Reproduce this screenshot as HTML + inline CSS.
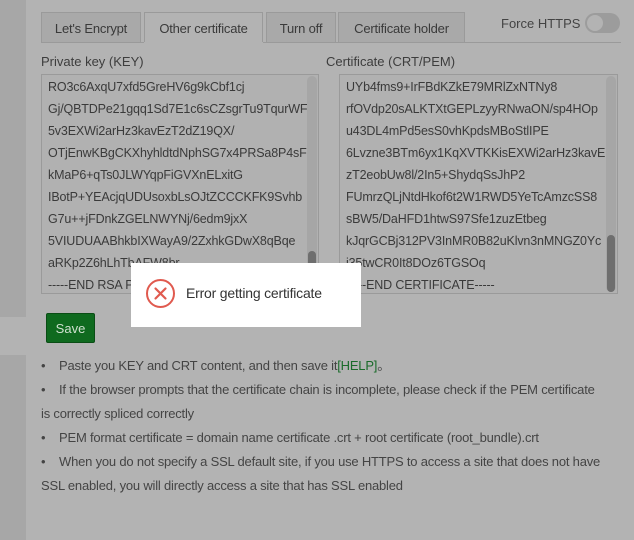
<html><head><style>
body{margin:0;width:634px;height:540px;background:#b3b3b3;font-family:"Liberation Sans",sans-serif;color:#3d3d3d;position:relative;overflow:hidden;font-size:12px}
.strip{position:absolute;left:0;width:26px;background:#a7a7a7}
.tab{position:absolute;top:12px;height:30px;border:1px solid #9a9a9a;border-bottom:none;background:#a9a9a9;box-sizing:border-box;text-align:center;line-height:32px;font-size:13px;color:#3a3a3a;letter-spacing:-0.2px}
.tab.act{background:#b3b3b3;height:31px}
.ta{position:absolute;top:74px;height:220px;border:1px solid #9a9a9a;box-sizing:border-box;background:#b1b1b1;overflow:hidden}
.ta .l{padding-left:6px;line-height:22px;font-size:12.5px;white-space:nowrap;color:#3a3a3a;letter-spacing:-0.15px}
.sbt{position:absolute;right:1px;top:1px;bottom:1px;width:10px;background:#a6a6a6;border-radius:5px}
.sb{position:absolute;right:2px;width:8px;border-radius:4px;background:#6e6e6e}
.li{position:absolute;left:41px;font-size:13px;color:#444;line-height:24px;white-space:nowrap;letter-spacing:-0.2px}
.b{display:inline-block;width:18px}
</style></head><body>
<div class="strip" style="top:0;height:317px"></div>
<div class="strip" style="top:355px;height:185px"></div>
<div class="tab" style="left:41px;width:100px">Let's Encrypt</div>
<div class="tab act" style="left:144px;width:119px">Other certificate</div>
<div class="tab" style="left:266px;width:70px">Turn off</div>
<div class="tab" style="left:338px;width:127px">Certificate holder</div>
<div style="position:absolute;left:41px;top:42px;width:580px;height:1px;background:#9a9a9a"></div>
<div style="position:absolute;left:144px;top:42px;width:119px;height:1px;background:#b3b3b3"></div>
<div style="position:absolute;left:501px;top:16px;font-size:13px;color:#444">Force HTTPS</div>
<div style="position:absolute;left:585px;top:13px;width:35px;height:20px;border-radius:10px;background:#9c9c9c"><div style="position:absolute;left:2px;top:2px;width:16px;height:16px;border-radius:50%;background:#b3b3b3"></div></div>
<div style="position:absolute;left:41px;top:54px;font-size:13px">Private key (KEY)</div>
<div style="position:absolute;left:326px;top:54px;font-size:13px">Certificate (CRT/PEM)</div>
<div class="ta" style="left:41px;width:278px;padding-top:1px">
<div class="l">RO3c6AxqU7xfd5GreHV6g9kCbf1cj</div><div class="l">Gj/QBTDPe21gqq1Sd7E1c6sCZsgrTu9TqurWF</div><div class="l">5v3EXWi2arHz3kavEzT2dZ19QX/</div><div class="l">OTjEnwKBgCKXhyhldtdNphSG7x4PRSa8P4sF</div><div class="l">kMaP6+qTs0JLWYqpFiGVXnELxitG</div><div class="l">IBotP+YEAcjqUDUsoxbLsOJtZCCCKFK9Svhb</div><div class="l">G7u++jFDnkZGELNWYNj/6edm9jxX</div><div class="l">5VIUDUAABhkbIXWayA9/2ZxhkGDwX8qBqe</div><div class="l">aRKp2Z6hLhTbAFW8br</div><div class="l">-----END RSA PRIVATE KEY-----</div>
<div class="sbt"></div><div class="sb" style="top:176px;height:40px"></div></div>
<div class="ta" style="left:339px;width:279px;padding-top:1px">
<div class="l">UYb4fms9+IrFBdKZkE79MRlZxNTNy8</div><div class="l">rfOVdp20sALKTXtGEPLzyyRNwaON/sp4HOp</div><div class="l">u43DL4mPd5esS0vhKpdsMBoStlIPE</div><div class="l">6Lvzne3BTm6yx1KqXVTKKisEXWi2arHz3kavE</div><div class="l">zT2eobUw8l/2In5+ShydqSsJhP2</div><div class="l">FUmrzQLjNtdHkof6t2W1RWD5YeTcAmzcSS8</div><div class="l">sBW5/DaHFD1htwS97Sfe1zuzEtbeg</div><div class="l">kJqrGCBj312PV3InMR0B82uKlvn3nMNGZ0Yc</div><div class="l">i35twCR0It8DOz6TGSOq</div><div class="l">-----END CERTIFICATE-----</div>
<div class="sbt"></div><div class="sb" style="top:160px;height:57px"></div></div>
<div style="position:absolute;left:46px;top:313px;width:49px;height:30px;background:#0f6a1f;border:1px solid #0a4d15;box-sizing:border-box;border-radius:2px;color:#cfe0cf;text-align:center;line-height:29px;font-size:13px">Save</div>
<div style="position:absolute;left:131px;top:263px;width:230px;height:64px;background:#fff"></div>
<div style="position:absolute;left:146px;top:279px;width:29px;height:29px;border:2px solid #e05a4f;border-radius:50%;box-sizing:border-box"><svg width="25" height="25" viewBox="0 0 25 25" style="position:absolute;left:0;top:0"><path d="M7.5 7.5L17.5 17.5M17.5 7.5L7.5 17.5" stroke="#e05a4f" stroke-width="2.2" stroke-linecap="round"/></svg></div>
<div style="position:absolute;left:186px;top:285px;font-size:14px;color:#333;letter-spacing:-0.2px">Error getting certificate</div>
<div class="li" style="top:354px"><span class="b">•</span>Paste you KEY and CRT content, and then save it<span style="color:#1a6b2a">[HELP]</span>。</div>
<div class="li" style="top:378px"><span class="b">•</span>If the browser prompts that the certificate chain is incomplete, please check if the PEM certificate<br>is correctly spliced correctly</div>
<div class="li" style="top:426px"><span class="b">•</span>PEM format certificate = domain name certificate .crt + root certificate (root_bundle).crt</div>
<div class="li" style="top:450px"><span class="b">•</span>When you do not specify a SSL default site, if you use HTTPS to access a site that does not have<br>SSL enabled, you will directly access a site that has SSL enabled</div>
</body></html>
